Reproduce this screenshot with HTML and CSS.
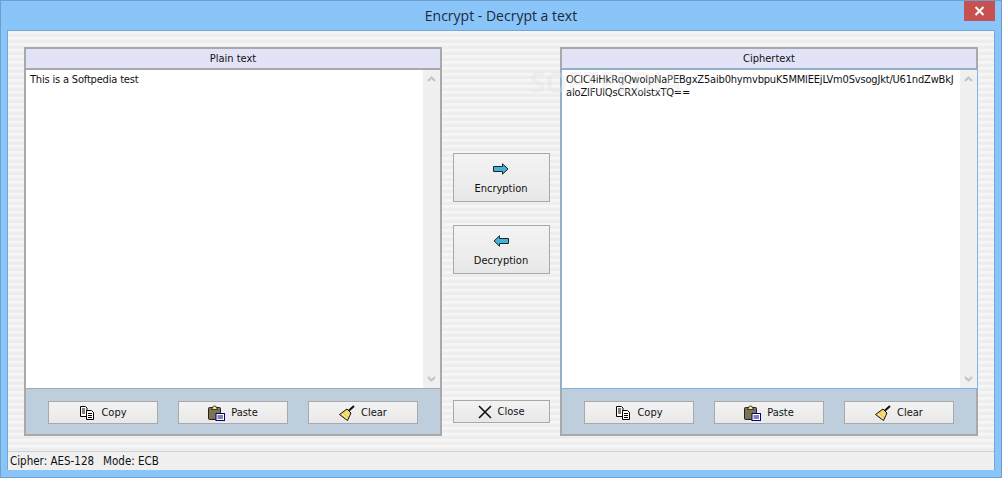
FILE: index.html
```html
<!DOCTYPE html>
<html>
<head>
	<meta charset="utf-8">
	<title>Encrypt - Decrypt a text</title>
	<link rel="stylesheet" href="styles.css">
</head>
<body>
	<div class="ventana">
		<div class="titulo">
			<span class="titulo_texto">Encrypt - Decrypt a text</span>
			<div class="cerrar">
				<svg width="11" height="10" viewBox="0 0 11 10"><path d="M1.5 1 L9.5 9 M9.5 1 L1.5 9" stroke="#fff" stroke-width="2" fill="none"/></svg>
			</div>
		</div>
		<div class="cliente">
			<div class="principal">
				<div class="panel">
					<div class="cabecera">Plain text</div>
					<div class="area">
						<div class="texto">This is a Softpedia test</div>
						<div class="scroll">
							<svg width="9" height="6" viewBox="0 0 9 6"><path d="M1 5 L4.5 1.5 L8 5" stroke="#c4c4c4" stroke-width="2" fill="none"/></svg>
							<svg width="9" height="6" viewBox="0 0 9 6"><path d="M1 1 L4.5 4.5 L8 1" stroke="#c4c4c4" stroke-width="2" fill="none"/></svg>
						</div>
					</div>
					<div class="pie">
						<button class="boton">
							<svg width="16" height="16" viewBox="0 0 16 16"><path d="M1.5 1.5 H6.5 L8 3 V11.5 H1.5 Z M3 4 H6 M3 6 H6 M3 8 H6" fill="#fff" stroke="#000"/><path d="M7.5 5.5 H12.5 L14.5 7.5 V14.5 H7.5 Z M9 8.5 H13 M9 10.5 H13 M9 12.5 H13" fill="#fff" stroke="#000"/></svg>
							Copy
						</button>
						<button class="boton">
							<svg width="17" height="16" viewBox="0 0 17 16"><rect x="0.5" y="2.5" width="12" height="12" rx="1" fill="#7d7350" stroke="#222"/><path d="M3.5 4.5 L5.5 1 H7.5 L9.5 4.5 Z" fill="#f2e58a" stroke="#222" stroke-width=".8"/><rect x="8" y="8.5" width="8.5" height="7" fill="#fff" stroke="#000080"/><path d="M9.5 11 H15 M9.5 13 H15" stroke="#000080"/></svg>
							Paste
						</button>
						<button class="boton">
							<svg width="16" height="16" viewBox="0 0 16 16"><path d="M0.5 9.5 L8 4 L12 8 L8.5 15.5 Z" fill="#f0d260" stroke="#111"/><path d="M3.5 9 L8 14 M6.5 7 L10 11" stroke="#fff6c0"/><path d="M10 5.5 L15 1" stroke="#111" stroke-width="2"/></svg>
							Clear
						</button>
					</div>
				</div>
				<div class="centro">
					<button class="boton boton_alto">
						<svg width="16" height="12" viewBox="0 0 16 12"><path d="M0.5 3.5 H9.5 V0.8 L15 6 L9.5 11.2 V8.5 H0.5 Z" fill="#3fb4d8" stroke="#222"/></svg>
						Encryption
					</button>
					<button class="boton boton_alto">
						<svg width="16" height="12" viewBox="0 0 16 12"><path d="M15.5 3.5 H6.5 V0.8 L1 6 L6.5 11.2 V8.5 H15.5 Z" fill="#3fb4d8" stroke="#222"/></svg>
						Decryption
					</button>
					<button class="boton boton_cerrar">
						<svg width="14" height="14" viewBox="0 0 14 14"><path d="M1 1 L13 13 M13 1 L1 13" stroke="#111" stroke-width="1.6" fill="none"/></svg>
						Close
					</button>
				</div>
				<div class="panel">
					<div class="cabecera">Ciphertext</div>
					<div class="area area_activa">
						<div class="texto">OClC4iHkRqQwolpNaPEBgxZ5aib0hymvbpuK5MMlEEjLVm0SvsogJkt/U61ndZwBkJ<br>aIoZlFUlQsCRXoIstxTQ==</div>
						<div class="scroll">
							<svg width="9" height="6" viewBox="0 0 9 6"><path d="M1 5 L4.5 1.5 L8 5" stroke="#c4c4c4" stroke-width="2" fill="none"/></svg>
							<svg width="9" height="6" viewBox="0 0 9 6"><path d="M1 1 L4.5 4.5 L8 1" stroke="#c4c4c4" stroke-width="2" fill="none"/></svg>
						</div>
					</div>
					<div class="pie">
						<button class="boton">
							<svg width="16" height="16" viewBox="0 0 16 16"><path d="M1.5 1.5 H6.5 L8 3 V11.5 H1.5 Z M3 4 H6 M3 6 H6 M3 8 H6" fill="#fff" stroke="#000"/><path d="M7.5 5.5 H12.5 L14.5 7.5 V14.5 H7.5 Z M9 8.5 H13 M9 10.5 H13 M9 12.5 H13" fill="#fff" stroke="#000"/></svg>
							Copy
						</button>
						<button class="boton">
							<svg width="17" height="16" viewBox="0 0 17 16"><rect x="0.5" y="2.5" width="12" height="12" rx="1" fill="#7d7350" stroke="#222"/><path d="M3.5 4.5 L5.5 1 H7.5 L9.5 4.5 Z" fill="#f2e58a" stroke="#222" stroke-width=".8"/><rect x="8" y="8.5" width="8.5" height="7" fill="#fff" stroke="#000080"/><path d="M9.5 11 H15 M9.5 13 H15" stroke="#000080"/></svg>
							Paste
						</button>
						<button class="boton">
							<svg width="16" height="16" viewBox="0 0 16 16"><path d="M0.5 9.5 L8 4 L12 8 L8.5 15.5 Z" fill="#f0d260" stroke="#111"/><path d="M3.5 9 L8 14 M6.5 7 L10 11" stroke="#fff6c0"/><path d="M10 5.5 L15 1" stroke="#111" stroke-width="2"/></svg>
							Clear
						</button>
					</div>
				</div>
				<div class="marca">SOFTPEDIA</div>
			</div>
			<div class="estado">
				<span>Cipher: AES-128</span>
				<span>Mode: ECB</span>
			</div>
		</div>
	</div>
</body>
</html>
```
FILE: styles.css
```css
* {
	box-sizing: border-box;
}

html, body {
	margin: 0;
	height: 100%;
	overflow: hidden;
}

body {
	font-family: "DejaVu Sans", sans-serif;
	font-stretch: condensed;
	font-size: 11px;
	color: #111;
}

.ventana {
	height: 478px;
	background: #8ac5fa;
	border: 1px solid #6f9fcc;
	display: flex;
	flex-direction: column;
	padding: 0 6px 7px;
}

.titulo {
	height: 29px;
	display: flex;
	justify-content: center;
	align-items: center;
	position: relative;
	flex: none;
}

.titulo_texto {
	font-family: "Open Sans", sans-serif;
	font-stretch: normal;
	font-size: 14px;
	color: #1c2a38;
}

.cerrar {
	position: absolute;
	top: 0;
	right: 0;
	width: 31px;
	height: 20px;
	background: #c75050;
	display: flex;
	justify-content: center;
	align-items: center;
}

.cliente {
	flex: 1;
	display: flex;
	flex-direction: column;
	border: 1px solid #74a6d6;
	border-bottom: 0;
	background: #f0f0f0;
}

.principal {
	flex: 1;
	position: relative;
	display: flex;
	padding: 16px 16px 15px;
	background: repeating-linear-gradient(180deg, #f6f6f6 0, #f6f6f6 2px, #f0f0f0 3px, #ececec 4px, #ececec 5px, #f0f0f0 6px);
}

.panel {
	width: 418px;
	flex: none;
	display: flex;
	flex-direction: column;
	border: 2px solid #a9a9a9;
	background: #bfcedc;
}

.cabecera {
	height: 21px;
	flex: none;
	background: #e3e3f7;
	text-align: center;
	line-height: 19px;
	border-bottom: 2px solid #a9a9a9;
}

.area {
	flex: 1;
	display: flex;
	background: #fff;
	border-bottom: 1px solid #a9a9a9;
}

.area_activa {
	border: 1px solid #7eb4ea;
	margin: -1px -2px 0 -1px;
}

.texto {
	flex: 1;
	padding: 3px 4px;
	line-height: 13px;
	white-space: nowrap;
	letter-spacing: -0.18px;
}

.scroll {
	width: 17px;
	flex: none;
	background: #f0f0f0;
	display: flex;
	flex-direction: column;
	justify-content: space-between;
	align-items: center;
	padding: 6px 0;
}

.pie {
	height: 45px;
	flex: none;
	display: flex;
	justify-content: center;
	align-items: center;
	gap: 20px;
	padding-top: 2px;
}

.boton {
	font-family: inherit;
	font-stretch: inherit;
	font-size: 11px;
	color: #111;
	width: 110px;
	height: 23px;
	border: 1px solid #a9a9a9;
	background: linear-gradient(180deg, #f3f3f3, #e8e8e8);
	display: flex;
	justify-content: center;
	align-items: center;
	gap: 6px;
	padding: 0;
}

.centro {
	flex: 1;
	display: flex;
	flex-direction: column;
	align-items: center;
	padding: 106px 0 13px;
	gap: 23px;
}

.centro .boton {
	width: 97px;
}

.centro .boton_alto {
	height: 49px;
	flex-direction: column;
	gap: 7px;
	padding-top: 2px;
}

.boton_cerrar {
	margin-top: auto;
}

.marca {
	position: absolute;
	left: 522px;
	top: 32px;
	font-family: "Open Sans", sans-serif;
	font-stretch: normal;
	font-size: 28px;
	font-weight: 700;
	color: rgba(225, 225, 225, 0.35);
	pointer-events: none;
}

.estado {
	height: 19px;
	flex: none;
	background: #f0f0f0;
	border-top: 1px solid #d0d0d0;
	display: flex;
	align-items: center;
	gap: 9px;
	padding: 0 2px;
	font-size: 11.5px;
}
```
